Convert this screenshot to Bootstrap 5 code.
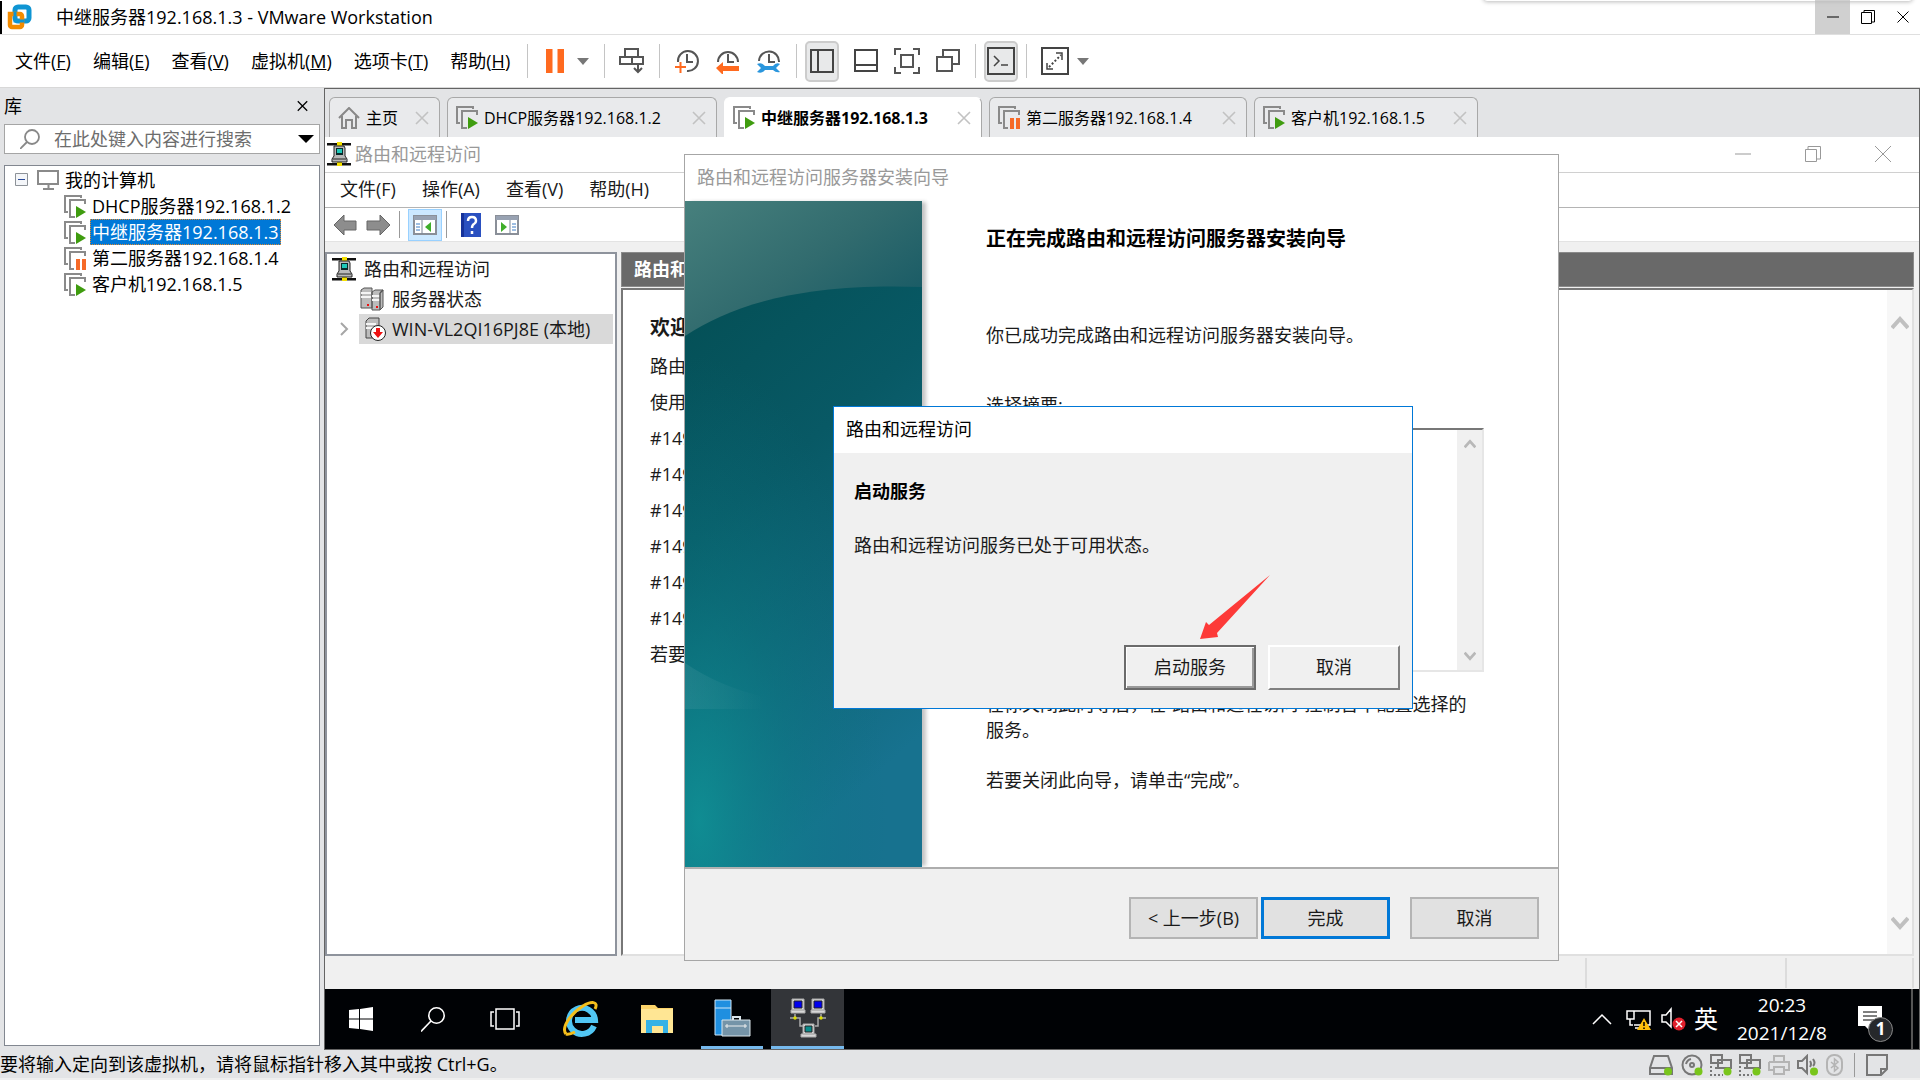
<!DOCTYPE html>
<html lang="zh-CN">
<head>
<meta charset="utf-8">
<meta name="viewport" content="width=device-width, initial-scale=1">
<title>中继服务器192.168.1.3 - VMware Workstation</title>
<link href="https://cdn.jsdelivr.net/npm/bootstrap@5.3.0/dist/css/bootstrap.min.css" rel="stylesheet">
<style>
body{font-family:"Open Sans","Noto Sans CJK SC",sans-serif;font-size:18px;line-height:26px;color:#000;background:#e3e4e6;overflow:hidden}
button,input{font:inherit;color:inherit}
ul{list-style:none;margin:0;padding:0}
svg{display:block;flex:none}
.bare{border:0;background:none;padding:0;line-height:inherit}
.win-title{height:35px;background:#fff;border-bottom:1px solid #dfdfdf}
.win-title .side-edge{width:2px;height:33px;background:#000}
.win-ctl button{width:35px;height:34px;display:flex;align-items:center;justify-content:center}
.win-ctl .is-hover{background:#d0d0d0}
.top-shade{position:absolute;top:-6px;right:8px;width:428px;height:7px;border-radius:4px;box-shadow:0 0 4px 1px #bbb}
.menu-row{height:53px;background:#fff;border-bottom:1px solid #d8d8d8;padding-left:15px}
.menu-row .menus{gap:22px;margin-right:17px}
.vr-line{width:1px;height:34px;background:#c4c4c4}
.sp{margin-left:14px}
.tool-set{gap:15px}
.tool-on{width:34px;height:41px;border:2px solid #ccc;border-radius:5px;background:#e8e9ea}
.tool{height:41px}
.tool,.tool-on{display:flex;align-items:center;justify-content:center}
.library{width:324px;padding:0 4px 4px}
.library header{height:36px}
.search-box{height:30px;background:#fff;border:1px solid #a5a5a5;margin-bottom:11px;padding:0 5px 0 15px}
.search-box input{border:0;outline:0;background:none;width:100%;padding:0;margin-left:14px}
.search-box input::placeholder{color:#6d6d6d;opacity:1}
.vm-tree{background:#fff;border:1px solid #828790;padding-top:1px}
.vm-tree .leaf{padding-left:59px}
.vm-tree .name{padding:0 1px;margin-left:4px;border:1px solid transparent}
.vm-tree .is-sel .name{background:#0078d7;color:#fff;border:1px dotted #e08a30}
.vm-tree .leaf,.vm-tree .root{height:26px;display:flex;align-items:center;line-height:24px}
.stage{border:1px solid #646464;min-width:0}
.tab-strip{height:48px;padding:8px 4px 0;gap:7px;font-size:16px}
.vm-tab{height:40px;border:1px solid #a8a8a8;border-bottom:0;border-radius:6px 6px 0 0;background:#e9eaec;padding:0 10px 0 8px;min-width:111px}
.vm-tab.is-on{background:#fff;border-color:#fff #a8a8a8 #fff #fff;font-weight:700}
.vm-tab.has-vm{min-width:224px}
.vm-tab.is-wide{min-width:258px}
.vm-tab.is-widest{min-width:270px}
.vm-tab svg:first-child{margin-right:6px}
.tab-x{color:#c2c2c2;margin-left:auto}
.guest{position:relative;background:#f0f0f0;min-height:0}
.mmc-title{height:36px;background:#fff;color:#999;border-bottom:1px solid #d0d0d0;padding:0 20px 2px 2px}
.mmc-ctl{gap:54px}
.mmc-menu{height:35px;background:#fff;border-bottom:1px solid #b4b4b4;padding:0 0 2px 15px;gap:26px;color:#1a1a1a}
.mmc-tools{height:34px;background:#fff;border-bottom:1px solid #e3e3e3;padding-left:8px;color:#888}
.mmc-tools .on{width:34px;height:32px;background:#cce8ff;border:1px solid #99d1ff;display:flex;align-items:center;justify-content:center}
.tool-bar-line{width:1px;height:27px;background:#999}
.mmc-body{padding:10px 5px 0 0;gap:4px;min-height:0}
.snap-tree{width:292px;background:#fff;border:2px solid #8e939c;padding:0 0 0 5px;color:#1a1a1a;height:704px}
.snap-tree li{height:30px;display:flex;align-items:center}
.snap-tree .arrow-gap{margin:0 10px 0 8px}
.snap-tree .picked{background:#d9d9d9;padding-left:5px;width:254px;height:30px}
.pane-head{height:35px;background:#696969;color:#fff;font-weight:700;padding:0 0 2px 12px;border:1px solid #8a8a8a}
.pane-body{background:#fff;border:2px solid;border-color:#777 #e0e0e0 #e0e0e0 #777;margin-top:1px}
.pane-text{padding:20px 27px;line-height:36px;color:#1a1a1a}
.pane-text h2{font-size:20px;font-weight:700;margin:0 0 2px;line-height:36px}
.pane-text p{margin:0}
.scroll-rail{width:25px;background:#f7f7f7;padding:26px 0 24px}
.mmc-foot{height:33px;padding-right:5px}
.mmc-foot span{border-right:2px solid #dcdcdc;height:30px}
.wizard{position:absolute;left:359px;top:17px;width:875px;height:807px;background:#fff;border:1px solid #a6a6a6;color:#1a1a1a}
.wizard .caption{height:46px;color:#999;padding:0 0 2px 12px}
.wiz-art{width:237px;box-shadow:5px 0 4px -1px #c4c4c4;position:relative}
.wiz-text{padding:25px 74px 0 64px;line-height:26px}
.wiz-text h1{font-size:20px;line-height:26px;font-weight:700;margin:0 0 70px;color:#000}
.wiz-text p{margin:0}
.wiz-text .pick-label{margin-top:44px}
.summary{height:244px;border:2px solid;border-color:#777 #e6e6e6 #e6e6e6 #777;margin:10px 0 19px}
.summary .rail{width:25px;background:#f0f0f0;padding:8px 0}
.wiz-foot{height:93px;background:#f0f0f0;border-top:2px solid #adadad;padding:7px 19px 0;color:#1a1a1a}
.push{width:129px;height:42px;background:#e1e1e1;border:2px solid #b4b4b4;padding:0}
.push.is-default{border:3px solid #0078d7;margin:0 20px 0 3px}
.prompt{position:absolute;left:508px;top:269px;width:580px;height:303px;background:#f0f0f0;border:1px solid #0078d7;color:#1a1a1a}
.prompt .caption{height:46px;background:#fff;padding:0 0 2px 12px;color:#000}
.prompt .msg{padding:25px 20px 0}
.prompt .msg p{margin:0 0 28px}
.prompt .acts{padding:0 12px 18px;gap:12px}
.raised{width:132px;height:45px;background:#f0f0f0;border:2px solid;border-color:#fff #808080 #808080 #fff;padding:0 0 2px}
.raised.is-default{border:2px solid #6b6b6b;box-shadow:inset 1px 1px #fff,inset -2px -2px #9a9a9a}
.pointer{position:absolute;left:366px;top:168px}
.taskbar{height:60px;background:#000205;color:#fff}
.task{height:60px;display:flex;align-items:center;justify-content:center}
.task.run{border-bottom:3px solid #76b9ed}
.task.front{background:#333539}
.clock{font-size:19px;line-height:28px;text-align:center;width:112px}
.notice{position:relative}
.notice b{position:absolute;left:26px;top:11px;width:25px;height:25px;border-radius:50%;border:1px solid #888;background:#26282b;font-size:17px;line-height:22px;text-align:center}
.peek{width:2px;height:60px;background:#555;margin:0 6px 0 28px}
.status{height:30px;padding-right:32px;border-bottom:2px solid #efefef}
.devices{gap:7px;color:#777;padding-top:2px}
.dev-line{width:1px;height:24px;background:#999}
</style>
</head>
<body class="vh-100 d-flex flex-column">
<svg width="0" height="0" class="position-absolute">
  <defs>
    <symbol id="vm-on" viewBox="0 0 22 23"><path d="M1 18V1h16v2M1 17h3M11 22H6V5h15v4" fill="none" stroke="#8a8a8a" stroke-width="2"/><path d="M12 11l10 6-10 6z" fill="#3f9c0f"/></symbol>
    <symbol id="vm-pause" viewBox="0 0 22 23"><path d="M1 18V1h16v2M1 17h3M10 22H6V5h15v4" fill="none" stroke="#8a8a8a" stroke-width="2"/><path d="M12 12h4v11h-4zM18 12h4v11h-4z" fill="#f66a28"/></symbol>
    <symbol id="x" viewBox="0 0 14 14"><path d="M1 1l12 12M13 1L1 13" fill="none" stroke="currentColor" stroke-width="1.6"/></symbol>
    <symbol id="rras" viewBox="0 0 24 24"><path d="M0 1h24v2.500H0zM0 21h24v2.500H0z" fill="#111"/><path d="M10 0h5v4h-5zM10 20h5v4h-5z" fill="#f4e000"/><path d="M7 4h10l1 2v8l2 3v3H5v-3l2-3z" fill="#b9b9b9" stroke="#222"/><path d="M9 6h7v7H9z" fill="#0a2a2a"/><path d="M10 7h5v4h-5z" fill="#1ec8b8"/><path d="M6 17h13" stroke="#222"/></symbol>
    <symbol id="server" viewBox="0 0 24 24"><path d="M1 3l3-2h8v20H1zM12 5l3-2h8v17l-3 3h-8z" fill="#bcbcbc" stroke="#555"/><path d="M1 6h10M1 10h10M12 9h8M12 13h8" stroke="#f4f4f4" stroke-width="2"/><path d="M20 6v17M20 6l3-3" stroke="#555" stroke-width="1.500"/><path d="M7 17h2v2H7zM16 19h2v2h-2z" fill="#e11"/></symbol>
    <symbol id="up" viewBox="0 0 18 14"><path d="M1 12l8-9 8 9" fill="none" stroke="currentColor" stroke-width="4"/></symbol>
    <symbol id="lan" viewBox="0 0 22 22"><path d="M1 1h11v8H1zM8 6h13v8H8zM5 14h3" fill="#e3e4e6" stroke="#777" stroke-width="2"/><path d="M1 12v9h12" fill="none" stroke="#777" stroke-width="2" stroke-dasharray="2 2"/><circle cx="17.500" cy="17.500" r="4" fill="#79c51c"/></symbol>
  </defs>
</svg>

<header class="win-title d-flex align-items-center position-relative">
  <div class="side-edge"></div>
  <svg class="ms-1 me-4" width="26" height="26" viewBox="0 0 26 26"><rect x="9" y="3" width="14" height="14" rx="3" fill="none" stroke="#0f95d3" stroke-width="5"/><path d="M4 10h10a2 2 0 0 1 2 2v9a2 2 0 0 1-2 2H6a2 2 0 0 1-2-2z" fill="none" stroke="#f38b00" stroke-width="4.500"/><path d="M9 8v9h9" fill="none" stroke="#0f95d3" stroke-width="3"/></svg>
  <span>中继服务器192.168.1.3 - VMware Workstation</span>
  <div class="top-shade"></div>
  <div class="win-ctl d-flex ms-auto">
    <button class="bare is-hover" aria-label="最小化"><svg width="12" height="2"><path d="M0 1h12" stroke="#000"/></svg></button>
    <button class="bare" aria-label="还原"><svg width="14" height="14" fill="none" stroke="#000"><path d="M.5 2.500h10v11H.5zM3 2V.5h10.500V12H11"/></svg></button>
    <button class="bare" aria-label="关闭"><svg width="12" height="12" stroke="#000"><path d="M.5.5l11 11M11.500.5l-11 11"/></svg></button>
  </div>
</header>

<div class="menu-row d-flex align-items-center">
  <nav class="menus d-flex">
    <button class="bare">文件(<u>F</u>)</button><button class="bare">编辑(<u>E</u>)</button><button class="bare">查看(<u>V</u>)</button><button class="bare">虚拟机(<u>M</u>)</button><button class="bare">选项卡(<u>T</u>)</button><button class="bare">帮助(<u>H</u>)</button>
  </nav>
  <div class="vr-line"></div>
  <button class="bare tool sp ps-1" aria-label="挂起"><svg width="44" height="24"><path d="M0 0h6.500v24H0zM11.500 0H18v24h-6.500z" fill="#ff6a1f"/><path d="M31 9h12l-6 7z" fill="#777"/></svg></button>
  <div class="vr-line sp"></div>
  <button class="bare tool sp" aria-label="发送"><svg width="26" height="26" fill="none" stroke="#555" stroke-width="2"><path d="M6 1h13v8H6zM1 9h12v7H1zM13 9h11v7H13M19 16v8M15 20l4 4 4-4"/></svg></button>
  <div class="vr-line sp"></div>
  <div class="d-flex tool-set sp">
    <button class="bare tool" aria-label="快照"><svg width="26" height="26" fill="none" stroke="#555" stroke-width="2"><path d="M4 14A10 10 0 1 1 13 23M13 6v8h6"/><path d="M1 19h11M6.500 14v11" stroke="#ff6a1f"/></svg></button>
    <button class="bare tool" aria-label="恢复快照"><svg width="26" height="26" fill="none" stroke="#555" stroke-width="2"><path d="M3 14a10 10 0 1 1 20 0M13 6v8h6"/><path d="M1 20l7-6v4h16v5H8v4z" fill="#ff6a1f" stroke="none"/></svg></button>
    <button class="bare tool" aria-label="管理快照"><svg width="26" height="26" fill="none" stroke="#555" stroke-width="2"><path d="M3 13a10 10 0 1 1 20 1M13 6v8h6"/><path d="M1 16q5-2 8 2h8q3-4 7-2l-4 4 4 4q-4 1-7-2H9q-3 4-8 2l4-4z" fill="#2a96dd" stroke="none"/></svg></button>
  </div>
  <div class="vr-line sp me-2"></div>
  <button class="bare tool-on" aria-label="显示库"><svg width="26" height="26" fill="none" stroke="#444" stroke-width="2"><path d="M2 2h22v22H2zM9 2v22"/></svg></button>
  <div class="d-flex tool-set sp">
    <button class="bare tool" aria-label="缩略图"><svg width="26" height="26" fill="none" stroke="#444" stroke-width="2"><path d="M2 2h22v21H2zM2 17h22"/></svg></button>
    <button class="bare tool" aria-label="全屏"><svg width="26" height="26" fill="none" stroke="#555" stroke-width="2"><path d="M7 7h12v12H7zM1 7V1h6M19 1h6v6M25 19v6h-6M7 25H1v-6"/></svg></button>
    <button class="bare tool" aria-label="Unity"><svg width="26" height="26" fill="none" stroke="#555" stroke-width="2"><path d="M8 8V2h16v14h-6M2 9h15v14H2z"/></svg></button>
  </div>
  <div class="vr-line sp me-2"></div>
  <button class="bare tool-on" aria-label="控制台"><svg width="28" height="28" fill="none" stroke="#444" stroke-width="2"><path d="M1 1h26v26H1z"/><path d="M7 9l5 5-5 5M14 18h7" stroke-width="1.500"/></svg></button>
  <div class="vr-line ms-2 ps-0"></div>
  <button class="bare tool sp" aria-label="拉伸"><svg width="48" height="28" fill="none" stroke="#444" stroke-width="2"><path d="M1 1h26v26H1z"/><path d="M15 6h6v7M6 16v6h6" stroke-width="1.500"/><path d="M8 20L20 8" stroke-dasharray="2 2"/><path d="M36 11h12l-6 7z" fill="#777" stroke="none"/></svg></button>
</div>

<div class="d-flex flex-fill overflow-hidden">
  <aside class="library d-flex flex-column">
    <header class="d-flex align-items-center justify-content-between pe-2"><span>库</span><button class="bare me-1" aria-label="关闭库"><svg width="11" height="12"><use href="#x"/></svg></button></header>
    <div class="search-box d-flex align-items-center">
      <svg width="20" height="20" fill="none" stroke="#888" stroke-width="1.800"><circle cx="12" cy="8" r="7"/><path d="M7 13l-7 7"/></svg>
      <input type="text" placeholder="在此处键入内容进行搜索" aria-label="搜索">
      <svg width="16" height="8"><path d="M0 0h16L8 8z"/></svg>
    </div>
    <div class="vm-tree flex-fill">
      <div class="root"><svg class="ms-2" width="16" height="14" fill="#f4f6f9" stroke="#8d9298"><path d="M2.500.5h12v12h-12z"/><path d="M5 6.500h7" stroke="#2a4a9a"/></svg><svg class="ms-2" width="22" height="20" fill="none" stroke="#8a8a8a" stroke-width="2"><path d="M1 1h20v13H1zM6 19h11M11.500 14v5"/></svg><span class="name">我的计算机</span></div>
      <ul>
        <li class="leaf"><svg width="22" height="23"><use href="#vm-on"/></svg><span class="name">DHCP服务器192.168.1.2</span></li>
        <li class="leaf is-sel"><svg width="22" height="23"><use href="#vm-on"/></svg><span class="name">中继服务器192.168.1.3</span></li>
        <li class="leaf"><svg width="22" height="23"><use href="#vm-pause"/></svg><span class="name">第二服务器192.168.1.4</span></li>
        <li class="leaf"><svg width="22" height="23"><use href="#vm-on"/></svg><span class="name">客户机192.168.1.5</span></li>
      </ul>
    </div>
  </aside>

  <main class="stage flex-fill d-flex flex-column">
    <nav class="tab-strip d-flex">
      <button class="bare vm-tab d-flex align-items-center"><svg width="22" height="22" fill="none" stroke="#888" stroke-width="2"><path d="M1 11L11 1l10 10M4 9v12h4v-8h6v8h4V9"/></svg>主页<svg class="tab-x" width="14" height="14"><use href="#x"/></svg></button>
      <button class="bare vm-tab has-vm is-widest d-flex align-items-center"><svg width="22" height="23"><use href="#vm-on"/></svg>DHCP服务器192.168.1.2<svg class="tab-x" width="14" height="14"><use href="#x"/></svg></button>
      <button class="bare vm-tab has-vm is-wide is-on d-flex align-items-center"><svg width="22" height="23"><use href="#vm-on"/></svg>中继服务器192.168.1.3<svg class="tab-x" width="14" height="14"><use href="#x"/></svg></button>
      <button class="bare vm-tab has-vm is-wide d-flex align-items-center"><svg width="22" height="23"><use href="#vm-pause"/></svg>第二服务器192.168.1.4<svg class="tab-x" width="14" height="14"><use href="#x"/></svg></button>
      <button class="bare vm-tab has-vm d-flex align-items-center"><svg width="22" height="23"><use href="#vm-on"/></svg>客户机192.168.1.5<svg class="tab-x" width="14" height="14"><use href="#x"/></svg></button>
    </nav>

    <div class="guest flex-fill d-flex flex-column">
      <div class="mmc-title d-flex align-items-center"><svg class="me-1" width="24" height="24"><use href="#rras"/></svg><span>路由和远程访问</span>
        <div class="mmc-ctl d-flex align-items-center ms-auto pe-2">
          <svg width="16" height="2"><path d="M0 1h16" stroke="#999"/></svg>
          <svg width="16" height="16" fill="none" stroke="#999"><path d="M.5 3.500h11v12H.5zM3 3V.5h12.500V13H12"/></svg>
          <svg width="16" height="16" stroke="#999"><path d="M0 0l16 16M16 0L0 16"/></svg>
        </div>
      </div>
      <nav class="mmc-menu d-flex align-items-center"><button class="bare">文件(F)</button><button class="bare">操作(A)</button><button class="bare">查看(V)</button><button class="bare">帮助(H)</button></nav>
      <div class="mmc-tools d-flex align-items-center">
        <svg width="24" height="22"><path d="M1 11L11 1v6h12v9H11v5z" fill="#8d8d8d" stroke="#666"/></svg>
        <svg class="ms-2 me-2" width="26" height="22"><path d="M25 11L15 1v6H2v9h13v5z" fill="#8d8d8d" stroke="#666"/></svg>
        <div class="tool-bar-line me-2"></div>
        <button class="bare on" aria-label="显示控制台树"><svg width="24" height="20"><path d="M1 1h22v18H1z" fill="#fff" stroke="#8a8f98" stroke-width="2"/><path d="M1 1h22v4H1z" fill="#98a2b2"/><path d="M9 5v14" stroke="#7d8696"/><path d="M3 9h4M3 12h4M3 15h4" stroke="#3c7cc4"/><path d="M18 7v10l-6-5z" fill="#3fae2a"/></svg></button>
        <div class="tool-bar-line ms-1 sp-end"></div>
        <svg class="sp" width="20" height="24"><path d="M0 0h20v24H0z" fill="#2a50c0"/><path d="M0 0h3v24H0z" fill="#16329a"/><path d="M7 8q0-4 4-4t4 4q0 2-2 3t-2 4M11 18v3" fill="none" stroke="#fff" stroke-width="2.500"/></svg>
        <svg class="sp" width="24" height="20"><path d="M1 1h22v18H1z" fill="#fff" stroke="#8a8f98" stroke-width="2"/><path d="M1 1h22v4H1z" fill="#98a2b2"/><path d="M15 5v14" stroke="#7d8696"/><path d="M17 9h4M17 12h4M17 15h4" stroke="#3c7cc4"/><path d="M6 7v10l6-5z" fill="#3fae2a"/></svg>
      </div>
      <div class="mmc-body d-flex flex-fill">
        <ul class="snap-tree">
          <li><svg width="24" height="24"><use href="#rras"/></svg><span class="ps-2">路由和远程访问</span></li>
          <li><svg class="ms-4 ps-1" width="28" height="24"><use href="#server"/></svg><span class="ps-2">服务器状态</span></li>
          <li><svg class="arrow-gap" width="9" height="14" fill="none" stroke="#a6a6a6" stroke-width="2"><path d="M1 1l6 6-6 6"/></svg><div class="picked d-flex align-items-center"><svg width="24" height="24"><path d="M2 4l3-3h10v20H2z" fill="#bcbcbc" stroke="#444"/><path d="M2 7h10M2 11h8" stroke="#f4f4f4" stroke-width="2"/><circle cx="14" cy="16" r="7.500" fill="#fff" stroke="#222"/><path d="M12 11h4v4h3l-5 6-5-6h3z" fill="#e11"/></svg><span class="ps-1 text-nowrap">WIN-VL2QI16PJ8E (本地)</span></div></li>
        </ul>
        <section class="flex-fill d-flex flex-column">
          <div class="pane-head d-flex align-items-center">路由和远程访问</div>
          <div class="pane-body d-flex flex-fill">
            <div class="pane-text flex-fill"><h2>欢迎</h2><p>路由</p><p>使用</p><p>#149</p><p>#149</p><p>#149</p><p>#149</p><p>#149</p><p>#149</p><p>若要</p></div>
            <div class="scroll-rail d-flex flex-column justify-content-between align-items-center" style="color:#c0c0c0"><svg width="18" height="14"><use href="#up"/></svg><svg width="18" height="14" viewBox="0 0 18 14"><path d="M1 2l8 9 8-9" fill="none" stroke="currentColor" stroke-width="4"/></svg></div>
          </div>
        </section>
      </div>
      <div class="mmc-foot d-flex justify-content-end align-items-center"><span></span><span style="width:200px"></span><span style="width:127px"></span></div>

      <section class="wizard d-flex flex-column">
        <div class="caption d-flex align-items-center">路由和远程访问服务器安装向导</div>
        <div class="d-flex flex-fill">
          <svg class="wiz-art h-100" viewBox="0 0 237 666" preserveAspectRatio="none">
            <defs>
              <linearGradient id="g1" x1="0" y1="0" x2=".9" y2="1"><stop offset="0" stop-color="#47807d"/><stop offset=".45" stop-color="#316b6e"/><stop offset="1" stop-color="#0a5160"/></linearGradient>
              <linearGradient id="g2" x1="0" y1="0" x2=".35" y2="1"><stop offset="0" stop-color="#044f55"/><stop offset=".4" stop-color="#085965"/><stop offset=".7" stop-color="#0f6679"/><stop offset="1" stop-color="#17728f"/></linearGradient>
              <radialGradient id="g3" cx=".06" cy=".92" r=".8"><stop offset="0" stop-color="#0f9295" stop-opacity=".85"/><stop offset=".5" stop-color="#0b8188" stop-opacity=".35"/><stop offset="1" stop-color="#0b7080" stop-opacity="0"/></radialGradient>
              <linearGradient id="g4" x1="0" y1="0" x2="1" y2="0"><stop offset="0" stop-color="#fff" stop-opacity=".07"/><stop offset="1" stop-color="#fff" stop-opacity="0"/></linearGradient>
            </defs>
            <path d="M0 0h237v180H0z" fill="url(#g1)"/>
            <path d="M0 135C50 102 120 82 237 86V666H0z" fill="url(#g2)"/>
            <path d="M0 135C50 102 120 82 237 86V666H0z" fill="url(#g3)"/>
            <path d="M0 462q35 24 80 34v12H0z" fill="url(#g4)"/>
          </svg>
          <div class="wiz-text flex-fill">
            <h1>正在完成路由和远程访问服务器安装向导</h1>
            <p>你已成功完成路由和远程访问服务器安装向导。</p>
            <p class="pick-label">选择摘要:</p>
            <div class="summary d-flex justify-content-end"><div class="rail d-flex flex-column justify-content-between align-items-center" style="color:#b8b8b8"><svg width="12" height="12" viewBox="0 0 18 14"><use href="#up"/></svg><svg width="12" height="12" viewBox="0 0 18 14"><path d="M1 2l8 9 8-9" fill="none" stroke="currentColor" stroke-width="4"/></svg></div></div>
            <p>在你关闭此向导后，在“路由和远程访问”控制台中配置选择的服务。</p>
            <p class="mt-4">若要关闭此向导，请单击“完成”。</p>
          </div>
        </div>
        <div class="wiz-foot d-flex align-items-center justify-content-end"><button class="push">&lt; 上一步(B)</button><button class="push is-default">完成</button><button class="push">取消</button></div>
      </section>

      <section class="prompt d-flex flex-column">
        <div class="caption d-flex align-items-center">路由和远程访问</div>
        <div class="msg flex-fill"><p class="fw-bold text-black">启动服务</p><p>路由和远程访问服务已处于可用状态。</p></div>
        <div class="acts d-flex justify-content-end"><button class="raised is-default">启动服务</button><button class="raised">取消</button></div>
        <svg class="pointer" width="72" height="66"><path d="M70 0L17 58l1 4L0 64 6 47l3 3z" fill="#fd3a38"/></svg>
      </section>

      <footer class="taskbar d-flex align-items-center">
        <button class="bare task" style="width:72px" aria-label="开始"><svg width="24" height="24" fill="#fff"><path d="M0 3l10-1v9.500H0zM11 2l13-2v11.500H11zM0 12.500h10V22L0 21zM11 12.500h13V24l-13-2z"/></svg></button>
        <button class="bare task" style="width:72px" aria-label="搜索"><svg width="24" height="25" fill="none" stroke="#fff" stroke-width="1.600"><circle cx="15.500" cy="8.500" r="7.700"/><path d="M10 14L0 24.500"/></svg></button>
        <button class="bare task" style="width:72px" aria-label="任务视图"><svg width="30" height="22" fill="none" stroke="#fff" stroke-width="1.500"><path d="M6 1h18v20H6zM4 4H1v14h3M26 4h3v14h-3"/></svg></button>
        <button class="bare task" style="width:80px" aria-label="Internet Explorer"><svg width="36" height="36" viewBox="0 0 36 36" fill="none"><path d="M31 25A13 13 0 1 1 32 19H12" stroke="#51c6f4" stroke-width="6"/><path d="M3 33C-2 27 7 13 20 5 28 0 36 0 32 8" stroke="#f5bf1c" stroke-width="3"/><path d="M3 33q3 1 9-2" stroke="#f5bf1c" stroke-width="3"/></svg></button>
        <button class="bare task" style="width:72px" aria-label="文件资源管理器"><svg width="34" height="30"><path d="M1 1h14l3 3h15v24H1z" fill="#fcd46a"/><path d="M1 5h32v24H1z" fill="#ffe694"/><path d="M6 29V16h22v13h-5v-7H12v7z" fill="#35b2e6"/></svg></button>
        <button class="bare task run ms-2" style="width:62px" aria-label="服务器管理器"><svg width="37" height="38"><path d="M1 1h16v35H1z" fill="#1f8fe0" stroke="#cfe6f7"/><path d="M1 9h16" stroke="#cfe6f7"/><path d="M19 21v-3h7v3" fill="none" stroke="#dbe6ec" stroke-width="2"/><path d="M8 21h28v16H8z" fill="#7594a8" stroke="#dbe6ec"/><path d="M11 27h22M13 25v4M31 25v4" stroke="#eee"/></svg></button>
        <button class="bare task run front ms-2" style="width:73px" aria-label="路由和远程访问"><svg width="36" height="40"><g stroke="#aaa" fill="#d8d8d8"><path d="M2 1h12v11H2zM1 12h14v3H1zM22 1h12v11H22zM21 12h14v3H21zM13 26h11v10H13zM11 36h15v3H11z"/></g><path d="M4 3h8v7H4zM24 3h8v7h-8z" fill="#00e" stroke="#222"/><path d="M15 28h7v6h-7z" fill="#0a8a8a" stroke="#222"/><path d="M0 20h10v8h3M36 20h-8v8h-3M5 16v4M31 16v4" fill="none" stroke="#aaa" stroke-width="1.500"/><circle cx="5" cy="20" r="1.700" fill="#dd0"/><circle cx="31" cy="20" r="1.700" fill="#dd0"/></svg></button>
        <div class="d-flex align-items-center ms-auto">
          <svg width="20" height="12" fill="none" stroke="#fff" stroke-width="1.500"><path d="M1 11l9-9 9 9"/></svg>
          <svg class="sp" width="26" height="24" fill="none" stroke="#fff" stroke-width="1.500"><path d="M8 4h16v14H8M1 4h7v8H1zM4 12v6h3M9 21h7"/><path d="M18 11l7 12H11z" fill="#ffbf0b" stroke="none"/><path d="M18 15v4M18 20.500v1.500" stroke="#000"/></svg>
          <svg class="ms-2" width="26" height="24" fill="none" stroke="#fff" stroke-width="1.500"><path d="M2 8h4l5-6v18l-5-5H2z"/><circle cx="19" cy="17" r="6.500" fill="#e0202c" stroke="none"/><path d="M16 14l6 6M22 14l-6 6"/></svg>
          <span class="mx-2 fs-4">英</span>
          <div class="clock">20:23<br>2021/12/8</div>
          <div class="notice ps-3 ms-1"><svg width="25" height="26"><path d="M0 0h24v20H14l-1 6-6-6H0z" fill="#fff"/><path d="M5 6h14M5 10h14M5 14h14" stroke="#000"/></svg><b>1</b></div>
          <div class="peek"></div>
        </div>
      </footer>
    </div>
  </main>
</div>

<footer class="status d-flex align-items-center">
  <span>要将输入定向到该虚拟机，请将鼠标指针移入其中或按 Ctrl+G。</span>
  <div class="devices d-flex align-items-center ms-auto">
    <svg width="25" height="22" fill="none" stroke="#777" stroke-width="2"><path d="M5 2h14l4 12v6H1v-6zM1 14h22"/><circle cx="19" cy="17.500" r="4" fill="#79c51c" stroke="none"/></svg>
    <svg width="22" height="22" fill="none" stroke="#777" stroke-width="2"><circle cx="11" cy="11" r="9.500"/><circle cx="11" cy="11" r="2"/><path d="M5 10q1-4 5-5"/><circle cx="17.500" cy="17.500" r="4" fill="#79c51c" stroke="none"/></svg>
    <svg width="22" height="22"><use href="#lan"/></svg>
    <svg width="22" height="22"><use href="#lan"/></svg>
    <svg width="22" height="22" fill="none" stroke="#b4b4b4" stroke-width="2"><path d="M6 8V2h10v6M1 8h20v8h-4M5 16H1V8M6 13h10v7H6z"/></svg>
    <svg width="22" height="22" fill="none" stroke="#777" stroke-width="2"><path d="M1 7h4l5-5v17l-5-5H1zM13 7q2 3 0 6M16 5q3 4 0 7"/><circle cx="17" cy="17.500" r="4" fill="#79c51c" stroke="none"/></svg>
    <svg width="17" height="22" fill="none" stroke="#b4b4b4"><rect x="1" y="1" width="15" height="20" rx="7" stroke-width="2"/><path d="M5 8l7 6-3.500 3V5L12 8l-7 6" stroke-width="1.500"/></svg>
    <div class="dev-line mx-1"></div>
    <svg width="22" height="22" fill="none" stroke="#777" stroke-width="2"><path d="M1 1h20v14l-6 6H1zM21 15h-6v6"/></svg>
  </div>
</footer>
<script src="https://cdn.jsdelivr.net/npm/bootstrap@5.3.0/dist/js/bootstrap.bundle.min.js"></script>
</body>
</html>
